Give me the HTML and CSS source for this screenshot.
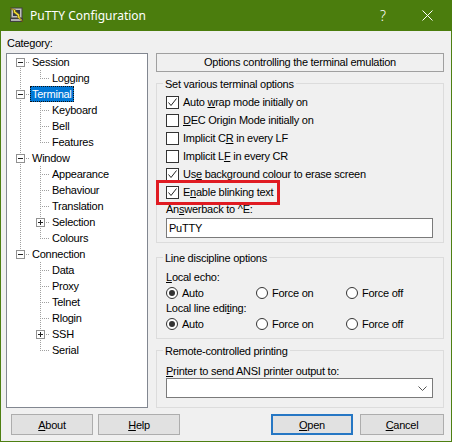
FILE: index.html
```html
<!DOCTYPE html>
<html>
<head>
<meta charset="utf-8">
<link rel="stylesheet" href="styles.css">
</head>
<body>
<div class="window">
  <div class="titlebar">
    <svg class="app-icon" width="16" height="16" viewBox="0 0 16 16">
      <rect x="2" y="1" width="11" height="10" fill="#c0c0c0" stroke="#404040" stroke-width="1"/>
      <rect x="4" y="3" width="7" height="6" fill="#303848"/>
      <rect x="1.5" y="11.5" width="12" height="3" fill="#b0b0b0" stroke="#404040" stroke-width="1"/>
      <path d="M1 1 L5 4 L4 5 L9 9 L8 10 L14 15 L10 9 L11 8 L6 4 L7 3 Z" fill="#f5e13a" stroke="#6b5a00" stroke-width="0.6"/>
    </svg>
    <span class="title">PuTTY Configuration</span>
    <span class="spacer"></span>
    <span class="help-btn">?</span>
    <svg class="close" width="11" height="11" viewBox="0 0 11 11">
      <path d="M0.5 0.5 L10.5 10.5 M10.5 0.5 L0.5 10.5" stroke="#fff" stroke-width="1"/>
    </svg>
  </div>

  <div class="main">
    <div class="left">
      <div class="cat-label">Cate<u>g</u>ory:</div>
      <div class="tree">
        <div class="row"><i class="g f"><b class="exp minus"></b></i><span class="lbl">Session</span></div>
        <div class="row"><i class="g v"></i><i class="g l"></i><span class="lbl">Logging</span></div>
        <div class="row"><i class="g t"><b class="exp minus"></b></i><span class="lbl sel">Terminal</span></div>
        <div class="row"><i class="g v"></i><i class="g t"></i><span class="lbl">Keyboard</span></div>
        <div class="row"><i class="g v"></i><i class="g t"></i><span class="lbl">Bell</span></div>
        <div class="row"><i class="g v"></i><i class="g l"></i><span class="lbl">Features</span></div>
        <div class="row"><i class="g t"><b class="exp minus"></b></i><span class="lbl">Window</span></div>
        <div class="row"><i class="g v"></i><i class="g t"></i><span class="lbl">Appearance</span></div>
        <div class="row"><i class="g v"></i><i class="g t"></i><span class="lbl">Behaviour</span></div>
        <div class="row"><i class="g v"></i><i class="g t"></i><span class="lbl">Translation</span></div>
        <div class="row"><i class="g v"></i><i class="g t"><b class="exp plus"></b></i><span class="lbl">Selection</span></div>
        <div class="row"><i class="g v"></i><i class="g l"></i><span class="lbl">Colours</span></div>
        <div class="row"><i class="g l"><b class="exp minus"></b></i><span class="lbl">Connection</span></div>
        <div class="row"><i class="g"></i><i class="g t"></i><span class="lbl">Data</span></div>
        <div class="row"><i class="g"></i><i class="g t"></i><span class="lbl">Proxy</span></div>
        <div class="row"><i class="g"></i><i class="g t"></i><span class="lbl">Telnet</span></div>
        <div class="row"><i class="g"></i><i class="g t"></i><span class="lbl">Rlogin</span></div>
        <div class="row"><i class="g"></i><i class="g t"><b class="exp plus"></b></i><span class="lbl">SSH</span></div>
        <div class="row"><i class="g"></i><i class="g l"></i><span class="lbl">Serial</span></div>
      </div>
    </div>

    <div class="right">
      <div class="header">Options controlling the terminal emulation</div>

      <div class="group g1">
        <div class="legend">Set various terminal options</div>
        <div class="check-row"><span class="cb on"><svg width="11" height="11" viewBox="0 0 11 11"><path d="M1.5 5.5 L4 8.5 L9.5 1.5" fill="none" stroke="#222" stroke-width="1"/></svg></span><span>Auto <u>w</u>rap mode initially on</span></div>
        <div class="check-row"><span class="cb"></span><span><u>D</u>EC Origin Mode initially on</span></div>
        <div class="check-row"><span class="cb"></span><span>Implicit C<u>R</u> in every LF</span></div>
        <div class="check-row"><span class="cb"></span><span>Implicit L<u>F</u> in every CR</span></div>
        <div class="check-row"><span class="cb on"><svg width="11" height="11" viewBox="0 0 11 11"><path d="M1.5 5.5 L4 8.5 L9.5 1.5" fill="none" stroke="#222" stroke-width="1"/></svg></span><span>Us<u>e</u> background colour to erase screen</span></div>
        <div class="check-row"><span class="hl"><span class="cb on"><svg width="11" height="11" viewBox="0 0 11 11"><path d="M1.5 5.5 L4 8.5 L9.5 1.5" fill="none" stroke="#222" stroke-width="1"/></svg></span><span>E<u>n</u>able blinking text</span></span></div>
        <div class="field-label">An<u>s</u>werback to ^E:</div>
        <div class="textbox">PuTTY</div>
      </div>

      <div class="group g2">
        <div class="legend">Line discipline options</div>
        <div class="sub-label l1"><u>L</u>ocal echo:</div>
        <div class="radio-row">
          <span class="radio-item"><span class="rb on"></span>Auto</span>
          <span class="radio-item"><span class="rb"></span>Force on</span>
          <span class="radio-item"><span class="rb"></span>Force off</span>
        </div>
        <div class="sub-label l2">Local line edi<u>t</u>ing:</div>
        <div class="radio-row">
          <span class="radio-item"><span class="rb on"></span>Auto</span>
          <span class="radio-item"><span class="rb"></span>Force on</span>
          <span class="radio-item"><span class="rb"></span>Force off</span>
        </div>
      </div>

      <div class="group g3">
        <div class="legend">Remote-controlled printing</div>
        <div class="sub-label l3"><u>P</u>rinter to send ANSI printer output to:</div>
        <div class="select">
          <span class="spacer"></span>
          <svg width="9" height="5" viewBox="0 0 9 5"><path d="M0.5 0.5 L4.5 4.5 L8.5 0.5" fill="none" stroke="#555" stroke-width="1"/></svg>
        </div>
      </div>
    </div>
  </div>

  <div class="buttons">
    <span class="btn about"><u>A</u>bout</span>
    <span class="btn help"><u>H</u>elp</span>
    <span class="spacer"></span>
    <span class="btn open default"><u>O</u>pen</span>
    <span class="btn cancel"><u>C</u>ancel</span>
  </div>
</div>
</body>
</html>
```

FILE: styles.css
```css
* { box-sizing: border-box; }
html, body { margin: 0; padding: 0; background: #f0f0f0; }
body {
  font-family: "Liberation Sans", Arial, sans-serif;
  font-size: 11px;
  letter-spacing: -0.25px;
  color: #000;
}
u { text-decoration: underline; text-underline-offset: 1px; }

.window {
  width: 452px;
  height: 442px;
  border: 1px solid #4e7f12;
  border-top: none;
  background: #f0f0f0;
  display: flex;
  flex-direction: column;
}

.titlebar {
  height: 31px;
  margin: 0 -1px;
  background: #4b7d0d;
  display: flex;
  align-items: center;
  flex: none;
}
.app-icon { margin-left: 9px; margin-top: -1px; flex: none; }
.title {
  margin-left: 5px;
  color: #fff;
  font-family: "Noto Sans", "Open Sans", sans-serif;
  font-size: 12px;
  letter-spacing: 0;
  margin-top: -1px;
}
.spacer { flex: 1; }
.help-btn {
  color: #fff;
  font-family: "Noto Sans", sans-serif;
  font-size: 14px;
  letter-spacing: 0;
  font-weight: 300;
  margin-right: 36px;
  margin-top: -1px;
}
.close { margin-right: 19px; flex: none; }

.main { display: flex; padding-left: 5px; flex: none; }
.left { width: 142px; flex: none; }
.cat-label { margin: 4px 0 2px 1px; line-height: 16px; height: 16px; }
.tree {
  height: 355px;
  background: #fff;
  border: 1px solid #828790;
  padding-left: 3px;
}
.row { display: flex; height: 16px; align-items: center; }
.g {
  width: 20px;
  height: 16px;
  flex: none;
  display: flex;
  align-items: flex-start;
  background-repeat: no-repeat;
}
.v {
  background-image: repeating-linear-gradient(to bottom, #a0a0a0 0 1px, transparent 1px 2px);
  background-size: 1px 16px;
  background-position: 10px 0;
}
.t {
  background-image: repeating-linear-gradient(to bottom, #a0a0a0 0 1px, transparent 1px 2px),
                    repeating-linear-gradient(to right, #a0a0a0 0 1px, transparent 1px 2px);
  background-size: 1px 16px, 10px 1px;
  background-position: 10px 0, 10px 8px;
}
.l {
  background-image: repeating-linear-gradient(to bottom, #a0a0a0 0 1px, transparent 1px 2px),
                    repeating-linear-gradient(to right, #a0a0a0 0 1px, transparent 1px 2px);
  background-size: 1px 8px, 10px 1px;
  background-position: 10px 0, 10px 8px;
}
.f {
  background-image: repeating-linear-gradient(to bottom, #a0a0a0 0 1px, transparent 1px 2px),
                    repeating-linear-gradient(to right, #a0a0a0 0 1px, transparent 1px 2px);
  background-size: 1px 8px, 10px 1px;
  background-position: 10px 8px, 10px 8px;
}
.exp {
  display: block;
  width: 9px;
  height: 9px;
  margin: 4px 0 0 6px;
  border: 1px solid #919191;
  background-color: #fff;
  background-repeat: no-repeat;
}
.minus {
  background-image: linear-gradient(#222, #222);
  background-size: 5px 1px;
  background-position: 1px 3px;
}
.plus {
  background-image: linear-gradient(#222, #222), linear-gradient(#222, #222);
  background-size: 5px 1px, 1px 5px;
  background-position: 1px 3px, 3px 1px;
}
.lbl { padding: 0 2px; line-height: 15px; height: 16px; display: flex; align-items: center; }
.sel { background: #0078d7; color: #fff; outline: 1px dotted #111; outline-offset: -1px; }

.right { width: 288px; margin-left: 8px; flex: none; }
.header {
  margin-top: 22px;
  height: 19px;
  border: 1px solid #a0a0a0;
  text-align: center;
  line-height: 17px;
}
.group { border: 1px solid #dcdcdc; }
.g1 { margin-top: 11px; padding-bottom: 4px; }
.g2 { margin-top: 14px; padding-bottom: 7px; }
.g3 { margin-top: 11px; padding-bottom: 9px; }
.legend {
  margin: -8px 0 0 6px;
  padding: 0 2px;
  width: fit-content;
  height: 16px;
  line-height: 16px;
  background: #f0f0f0;
}
.g1 .legend { margin-bottom: 1px; }
.check-row { height: 18px; display: flex; align-items: center; padding-left: 9px; }
.cb {
  width: 13px;
  height: 13px;
  border: 1px solid #333;
  background: #fff;
  margin-right: 4px;
  flex: none;
  display: flex;
  align-items: center;
  justify-content: center;
}
.hl { display: flex; align-items: center; position: relative; height: 18px; }
.hl::after {
  content: "";
  position: absolute;
  left: -10px;
  right: -7px;
  top: -3px;
  bottom: -4px;
  border: 3px solid #e01b22;
}
.field-label { height: 17px; line-height: 17px; padding-left: 9px; }
.textbox {
  margin-left: 9px;
  width: 267px;
  height: 20px;
  border: 1px solid #7a7a7a;
  background: #fff;
  line-height: 18px;
  padding-left: 2px;
}
.sub-label { padding-left: 9px; }
.l1 { margin-top: 4px; height: 15px; line-height: 15px; }
.l2 { height: 16px; line-height: 16px; }
.l3 { margin-top: 5px; height: 14px; line-height: 14px; }
.radio-row { display: flex; height: 15px; align-items: center; padding-left: 9px; }
.radio-item { width: 90px; display: flex; align-items: center; }
.rb {
  width: 12px;
  height: 12px;
  border: 1px solid #333;
  border-radius: 50%;
  background: #fff;
  margin-right: 4px;
  flex: none;
  display: flex;
  align-items: center;
  justify-content: center;
}
.rb.on::before {
  content: "";
  width: 6px;
  height: 6px;
  border-radius: 50%;
  background: #333;
}
.select {
  margin-left: 9px;
  width: 267px;
  height: 20px;
  border: 1px solid #7a7a7a;
  background: #fff;
  display: flex;
  align-items: center;
  padding-right: 5px;
}

.buttons { display: flex; margin-top: 6px; padding: 0 7px 0 10px; flex: none; }
.btn {
  height: 21px;
  width: 82px;
  background: #e1e1e1;
  border: 1px solid #adadad;
  display: flex;
  align-items: center;
  justify-content: center;
  flex: none;
}
.help { margin-left: 5px; }
.open { margin-right: 7px; }
.cancel { width: 84px; }
.default { border-color: #2677c4; box-shadow: inset 0 0 0 1px #2677c4; }
```
